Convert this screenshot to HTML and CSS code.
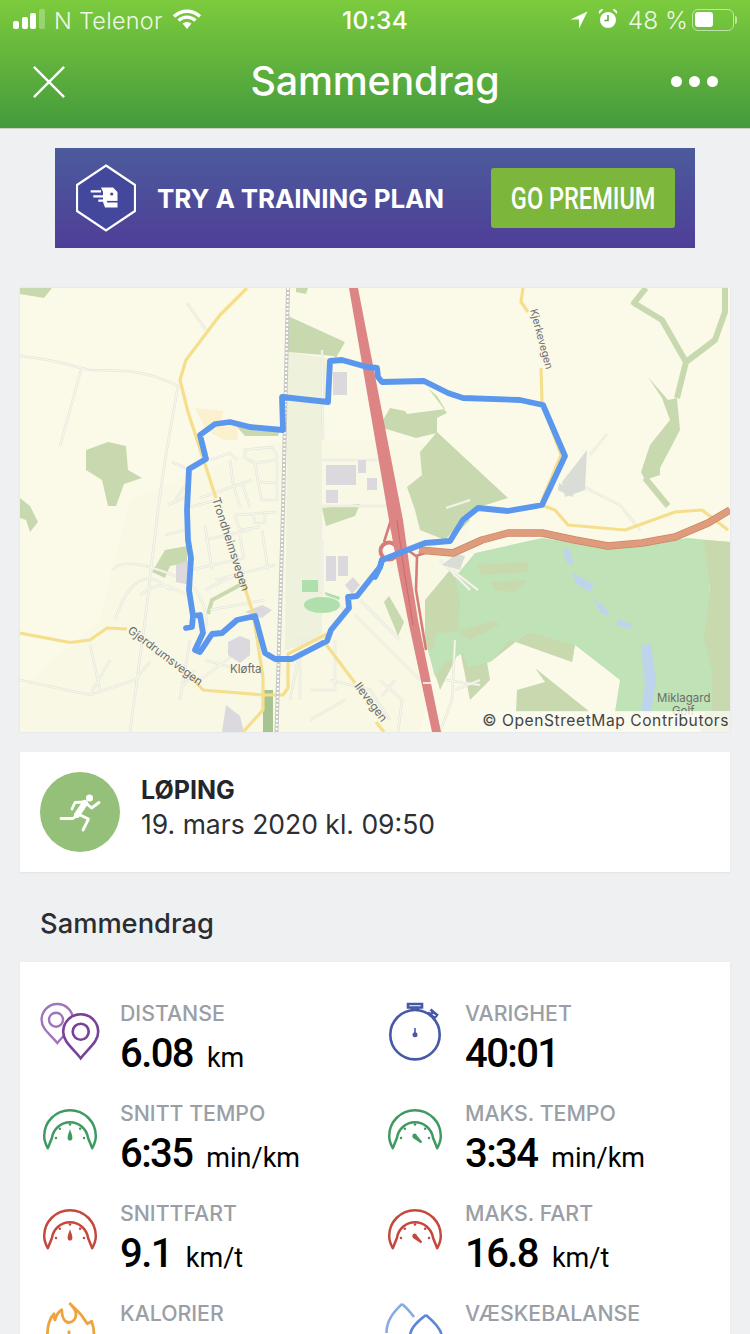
FILE: index.html
```html
<!DOCTYPE html>
<html lang="nb">
<head>
<meta charset="utf-8">
<title>Sammendrag</title>
<link rel="stylesheet" href="styles.css">
</head>
<body>
<div class="page">
  <header class="top">
    <div class="status">
      <div class="status-left">
        <svg class="sig" viewBox="0 0 34 22"><rect x="0" y="13" width="6" height="8" rx="2"/><rect x="9" y="9" width="6" height="12" rx="2"/><rect x="17" y="5" width="6" height="16" rx="2"/><rect class="dim" x="26" y="1" width="6" height="20" rx="2"/></svg>
        <span class="carrier">N Telenor</span>
        <svg class="wifi" viewBox="0 0 30 22"><path class="wifi-arc" d="M2 8.500C9.500 1.500 20.500 1.500 28 8.500M6.500 12.500C11.500 8 18.500 8 23.500 12.500"/><path class="wifi-fill" d="M10.500 15.500C13 13.400 17 13.400 19.500 15.500L15 21Z"/></svg>
      </div>
      <div class="clock">10:34</div>
      <div class="status-right">
        <svg class="loc" viewBox="0 0 18 18"><path d="M17.500 0.500 0.500 8.500H9V17.500Z"/></svg>
        <svg class="alarm" viewBox="0 0 20 22"><circle cx="10" cy="12" r="8"/><path d="M1 6 5.500 1.500C3 .5 0 2.500 1 6ZM19 6 14.500 1.500C17 .5 20 2.500 19 6Z"/><path class="alarm-hand" d="M10 7V12.500H6.500"/></svg>
        <span class="pct">48 %</span>
        <div class="batt"><div class="batt-fill"></div></div>
        <div class="nub"></div>
      </div>
    </div>
    <div class="nav">
      <svg class="close" viewBox="0 0 36 36"><path d="M2 2 34 34M34 2 2 34"/></svg>
      <h1 class="title">Sammendrag</h1>
      <div class="more"><i></i><i></i><i></i></div>
    </div>
  </header>

  <main class="body">
    <div class="banner">
      <svg class="hex" viewBox="0 0 60 68">
        <path class="hex-shape" d="M30 1.500 59 21V47L30 66.500 1 47V21Z"/>
        <path class="hex-glyph" d="M25 23.500H37L41.500 28V43.500H29L27 38V28Z"/>
        <path class="hex-line" d="M14.700 27.300H25M17.300 32.300H27M22.300 36.700H28"/>
        <path class="hex-dark" d="M31 37.700H42"/>
        <circle class="hex-eye" cx="35.700" cy="30" r="1.600"/>
      </svg>
      <span class="banner-text">TRY A TRAINING PLAN</span>
      <div class="cta"><span class="cta-text">GO PREMIUM</span></div>
    </div>

    <section class="map">
      <svg class="map-svg" viewBox="20 288 710 444">
        <defs>
          <g id="streets">
            <path d="M20 356C60 360 70 366 90 370 130 370 150 372 178 386L165 460 158 510 152 560 145 620 130 732"/>
            <path d="M81 370 60 446M187 303 206 330"/>
            <path d="M172 462 190 470 200 465M175 500 190 480M168 505 190 495M165 535 185 530"/>
            <path d="M243 450 272 447 277 455 277 483 277 500 262 500 258 482 255 463 245 458 245 450M255 463 277 460M258 482 277 483"/>
            <path d="M210 460 230 453 237 460M230 460 233 483 240 507M200 498 252 480M242 483 250 507M190 507 217 500M233 515 277 512M253 513 255 523 265 523 265 512M235 515 240 530 260 527"/>
            <path d="M205 540 250 530M215 580 275 565M190 570 245 558M205 525 212 570 M240 535 244 560M262 530 268 570"/>
            <path d="M140 595C150 588 160 578 186 595M112 570C125 555 160 570 186 580 200 590 210 615 205 630M115 620C130 575 150 570 170 590M205 590 245 570M210 610 265 600"/>
            <path d="M20 680 90 695 135 680 150 662M90 645 100 690M110 660 90 695M190 640 180 700M200 680 240 650M205 660 240 670M180 690 195 670"/>
            <path d="M322 350 323 440M322 460H392M322 506H392M320 520 320 590 345 610M322 540V590M360 600 400 640M355 615 420 680M330 640H300V700M310 690H335V640M330 680 370 690 390 720M310 720 345 700M300 650 290 700"/>
            <path d="M590 455 607 434M570 480 620 505 640 530M446 508 470 500M440 560 470 590M452 570 478 590M455 640 452 700 440 732M445 680 480 685M455 690 480 680M380 680 402 700 398 732M382 696 395 680"/>
          </g>
        </defs>
        <rect class="m-bg" x="20" y="288" width="710" height="444"/>
        <path class="m-town" d="M130 500 200 470 285 440 285 732H20V690L100 620ZM285 440H420L470 520 420 732H285Z"/>
        <path class="m-field" d="M288 352 327 358V402H322V640L285 650Z"/>
        <path class="m-sand" d="M195 408 223 411 222 425 237 426 238 440 224 440 206 430Z"/>

        <g class="m-forest">
          <path d="M20 288H52L44 298 20 294ZM288 316 345 342 336 358 334 356 288 352ZM86 450 108 442 126 446 128 470 142 478 124 484 116 506 108 506 102 480 86 470ZM20 498 30 506 38 522 30 532 26 520 20 518ZM296 288H308L306 294 296 292ZM383 420 390 408 405 411 407 414 445 409 437 396 428 388 447 413 437 418 437 433 416 438 383 428ZM420 452 437 432 508 498 476 508 463 520 445 540 420 530 415 510 407 487 422 475ZM165 550 187 546 187 563 170 566 165 578 152 572ZM322 508 360 504 355 516 326 526ZM236 426 250 427 280 430 278 436 245 436ZM425 600 450 570 480 620 490 680 470 700 460 650 440 690 425 640ZM708 540 730 542V732H700L708 700 700 640 710 590Z"/>
          <path d="M668 400 677 398 680 430 660 468 660 475 645 480 641 472 650 445 670 420 662 398 648 377Z"/>
          <path d="M389 596 404 622 398 636 384 602ZM460 510 470 520 458 532Z"/>
        </g>
        <path class="m-strip" d="M646 288 634 303 662 320 686 362 715 340 725 312V288M686 362 677 398M645 478 668 506"/>
        <path class="m-strip-soft" d="M208 614 212 600 240 585"/>
        <path class="m-golf" d="M455 577 475 553 542 538 608 548 688 538 708 540 710 600 706 640 720 700 730 700V712H615L620 680 575 645 572 662 528 632 490 662 468 667 463 653 445 663 435 677 428 650 425 607Z"/>
        <path class="m-rough" d="M425 607 455 577 460 600 458 632 436 633 433 650 428 650ZM458 632 495 620 500 625 470 640ZM490 662 528 632 575 645 572 662 510 640ZM477 565 528 562 528 572 482 575ZM490 582 528 580 515 592 495 590ZM704 540 730 542V580L716 610 720 660 730 680 712 670 704 640 710 590Z"/>
        <path class="m-forest-solid" d="M490 712H516L517 690 545 682 535 668 590 712ZM712 672 730 675V732H712Z"/>
        <g class="m-water">
          <path d="M563 549 570 550 574 566 566 562ZM572 572 594 585 590 592 576 584ZM593 598 606 608 610 617 600 612ZM618 619 632 624 630 629 616 625Z"/>
          <path d="M641 646 651 644 656 680 651 712H641L645 685Z"/>
        </g>

        <use class="m-street" href="#streets"/>
        <use class="m-street-core" href="#streets"/>

        <g class="m-build">
          <path d="M333 372H347V395H333ZM326 465H356V485H326ZM326 490H338V503H326ZM367 478H377V490H367ZM358 460H366V473H358ZM326 556H336V581H326ZM338 556H348V576H338ZM345 585 353 577 360 585 352 594ZM228 642 240 636 250 640 250 655 240 663 228 655ZM226 705 240 716 244 732H222ZM176 565 190 560 190 585 176 582ZM245 612 262 605 272 610 262 618ZM390 530H395V520H390Z"/>
          <path class="m-build-lite" d="M562 482 587 450 585 490 565 497ZM559 483 575 492 572 497 558 490ZM456 554 465 556 460 570 442 565Z"/>
        </g>
        <g class="m-green2">
          <path d="M302 580H318V592H302ZM325 592 340 597 339 600 326 595Z"/>
          <ellipse cx="322" cy="605" rx="18" ry="8"/>
        </g>
        <path class="m-rail-green" d="M263 690H273V732H263Z"/>

        <path class="m-yellow" d="M247 288 220 315 186 360 180 380 188 412 216 498M243 582 253 613 263 677 263 710 243 732"/>
        <path class="m-yellow" d="M20 633 70 642.500 90 640 107 628 127 629M192 678 203 690 263 695 283 695 288 688 288 654 327 634M325 643 355 683M376 722 384 732"/>
        <path class="m-yellow" d="M523 288 521 302 528 312M541 368 542 403 561 455 543 498 541 505 555 510 568 525 625 530 675 512 702 510 728 530"/>

        <path class="m-rail" d="M288 288 283 510 276.500 732"/>
        <path class="m-rail-top" d="M288 288 283 510 276.500 732"/>

        <circle class="m-ring" cx="389" cy="551" r="8.500"/>
        <path class="m-red-thin" d="M391 520 384 542M417 557 416 590 426 650M405 548 416 556 428 552"/>
        <path class="m-orange-edge" d="M419 550 453 553 482 540 508 533 542 533 575 540 608 546 642 543 675 537 708 523 730 510"/>
        <path class="m-orange" d="M419 550 453 553 482 540 508 533 542 533 575 540 608 546 642 543 675 537 708 523 730 510"/>
        <path class="m-red" d="M349 288H358L403 520 410 570 418 620 441 732H432L408 620 398 570 389 520Z"/>
        <path class="m-red-line" d="M397 520 404 570 413 625"/>
        <path class="m-bridge" d="M423 683H432"/>

        <path class="m-route" d="M186 628 192 627 193 616 200 615 203 633 195 650 200 652 212 634 222 633 237 620 255 616 265 653 275 659 292 659 327 641 331 630 349 608 348 597 357 596 380 567 382 560 425 543 450 541 463 520 478 508 508 511 542 505 565 456 543 405 520 400 463 398 448 393 424 381 382 382 378 377 377 368 367 367 342 360 330 361 328 402 282 397 283 430 250 427 230 422 215 424 200 435 206 459 189 469 187 510 188 540 191 558 189 590 193 616"/>
        <path class="m-route" d="M382 560 380 567 375 577"/>

        <text class="m-label" transform="translate(212 499) rotate(72)">Trondheimsvegen</text>
        <text class="m-label" transform="translate(127 632) rotate(37)">Gjerdrumsvegen</text>
        <text class="m-label" transform="translate(354 686) rotate(53)">Ilevegen</text>
        <text class="m-label m-label-sm" transform="translate(530 310) rotate(75)">Kjerkevegen</text>
        <text class="m-label" x="230" y="673">Kløfta</text>
        <text class="m-label" x="657" y="702">Miklagard</text>
        <text class="m-label" x="672" y="715">Golf</text>
      </svg>
      <div class="attr">© OpenStreetMap Contributors</div>
    </section>

    <section class="activity">
      <div class="avatar">
        <svg class="runner" viewBox="0 0 80 80">
          <circle class="run-head" cx="49.500" cy="26" r="3.500"/>
          <path class="run-body" d="M45 31 37 43"/>
          <path class="run-limb" d="M44 30 35 30.500 32 37M45 30 51.500 36 59 30.500M37 43 33 46.500H21M38 42 48.500 47 43 58"/>
        </svg>
      </div>
      <div class="activity-text">
        <div class="activity-name">LØPING</div>
        <div class="activity-date">19. mars 2020 kl. 09:50</div>
      </div>
    </section>

    <h2 class="section-title">Sammendrag</h2>

    <section class="stats">
      <div class="stat">
        <svg class="icon" viewBox="0 0 60 60">
          <path class="pin-a" d="M17.300 44C10 35 1.600 30 1.600 20.700 1.600 12 8.500 5 17.300 5S33 12 33 20.700C33 30 24.500 35 17.300 44Z"/>
          <circle class="pin-a" cx="16" cy="20.700" r="7"/>
          <path class="pin-b" d="M40.700 59.300C33 49 23.200 43 23.200 32.700 23.200 23 31 15.200 40.700 15.200S58.200 23 58.200 32.700C58.200 43 48.400 49 40.700 59.300Z"/>
          <circle class="pin-b" cx="40.700" cy="32.700" r="8"/>
        </svg>
        <div class="stat-text">
          <div class="stat-label">DISTANSE</div>
          <div class="stat-value"><b>6.08</b><span>km</span></div>
        </div>
      </div>
      <div class="stat">
        <svg class="icon" viewBox="0 0 60 60">
          <path class="watch" d="M30 11A24.700 24.700 0 1 0 30 60.400 24.700 24.700 0 1 0 30 11ZM27 11V8.500H33V11M23 5H37V8.500H23ZM44 17 47.500 13.500M45.500 10.500 52 16 49.500 19 43 13.500"/>
          <circle class="watch-dot" cx="30" cy="35.700" r="2.500"/>
          <path class="watch-needle" d="M30 35.700V29"/>
        </svg>
        <div class="stat-text">
          <div class="stat-label">VARIGHET</div>
          <div class="stat-value"><b>40:01</b></div>
        </div>
      </div>
      <div class="stat">
        <svg class="icon gauge gauge-green" viewBox="0 0 60 60">
          <path class="g-line" d="M7 42.700C4.500 38 3.300 34 3.300 30A26.700 26.700 0 0 1 56.700 30C56.700 34 55.500 38 53 42.700L48.700 32A18.900 18.900 0 0 0 11.300 32Z"/>
          <g class="g-dots"><circle cx="15.500" cy="32" r="1.300"/><circle cx="19.500" cy="22.500" r="1.300"/><circle cx="30" cy="18" r="1.300"/><circle cx="40.500" cy="22.500" r="1.300"/><circle cx="44.500" cy="32" r="1.300"/></g>
          <path class="g-dots" d="M27.500 32C27.500 29 29 26 30 23 31 26 32.500 29 32.500 32 32.500 35.500 27.500 35.500 27.500 32Z"/>
        </svg>
        <div class="stat-text">
          <div class="stat-label">SNITT TEMPO</div>
          <div class="stat-value"><b>6:35</b><span>min/km</span></div>
        </div>
      </div>
      <div class="stat">
        <svg class="icon gauge gauge-green" viewBox="0 0 60 60">
          <path class="g-line" d="M7 42.700C4.500 38 3.300 34 3.300 30A26.700 26.700 0 0 1 56.700 30C56.700 34 55.500 38 53 42.700L48.700 32A18.900 18.900 0 0 0 11.300 32Z"/>
          <g class="g-dots"><circle cx="15.500" cy="32" r="1.300"/><circle cx="19.500" cy="22.500" r="1.300"/><circle cx="30" cy="18" r="1.300"/><circle cx="40.500" cy="22.500" r="1.300"/><circle cx="44.500" cy="32" r="1.300"/></g>
          <path class="g-dots" d="M28 28C30 26.500 32 28 32 29.500L37.500 36 36 37.500 29.500 33C27.500 32.500 26.500 30 28 28Z"/>
        </svg>
        <div class="stat-text">
          <div class="stat-label">MAKS. TEMPO</div>
          <div class="stat-value"><b>3:34</b><span>min/km</span></div>
        </div>
      </div>
      <div class="stat">
        <svg class="icon gauge gauge-red" viewBox="0 0 60 60">
          <path class="g-line" d="M7 42.700C4.500 38 3.300 34 3.300 30A26.700 26.700 0 0 1 56.700 30C56.700 34 55.500 38 53 42.700L48.700 32A18.900 18.900 0 0 0 11.300 32Z"/>
          <g class="g-dots"><circle cx="15.500" cy="32" r="1.300"/><circle cx="19.500" cy="22.500" r="1.300"/><circle cx="30" cy="18" r="1.300"/><circle cx="40.500" cy="22.500" r="1.300"/><circle cx="44.500" cy="32" r="1.300"/></g>
          <path class="g-dots" d="M27.500 32C27.500 29 29 26 30 23 31 26 32.500 29 32.500 32 32.500 35.500 27.500 35.500 27.500 32Z"/>
        </svg>
        <div class="stat-text">
          <div class="stat-label">SNITTFART</div>
          <div class="stat-value"><b>9.1</b><span>km/t</span></div>
        </div>
      </div>
      <div class="stat">
        <svg class="icon gauge gauge-red" viewBox="0 0 60 60">
          <path class="g-line" d="M7 42.700C4.500 38 3.300 34 3.300 30A26.700 26.700 0 0 1 56.700 30C56.700 34 55.500 38 53 42.700L48.700 32A18.900 18.900 0 0 0 11.300 32Z"/>
          <g class="g-dots"><circle cx="15.500" cy="32" r="1.300"/><circle cx="19.500" cy="22.500" r="1.300"/><circle cx="30" cy="18" r="1.300"/><circle cx="40.500" cy="22.500" r="1.300"/><circle cx="44.500" cy="32" r="1.300"/></g>
          <path class="g-dots" d="M28 28C30 26.500 32 28 32 29.500L37.500 36 36 37.500 29.500 33C27.500 32.500 26.500 30 28 28Z"/>
        </svg>
        <div class="stat-text">
          <div class="stat-label">MAKS. FART</div>
          <div class="stat-value"><b>16.8</b><span>km/t</span></div>
        </div>
      </div>
      <div class="stat">
        <svg class="icon" viewBox="0 0 60 60">
          <path class="flame" d="M29.300 4C33 8 36 11 36 15 36 20 33 23 29 23.500 25 23.500 22 19 21.700 10.700 18 13 16 17 15 21 14 19 14 17 14 14.700 10 19 7.500 26 7.300 36M29.300 4C34 9 40 13 43.300 19 45 21 46 23 47.300 24.700 49 24 50.500 23 51.700 22.300 53 26 54 30 54 36M29 31.500V36"/>
        </svg>
        <div class="stat-text">
          <div class="stat-label">KALORIER</div>
        </div>
      </div>
      <div class="stat">
        <svg class="icon" viewBox="0 0 60 60">
          <path class="drop-a" d="M17 5C10 12 1.500 20 1.500 34M17 5C22 9 26 14 29 18"/>
          <path class="drop-b" d="M41 16C33 22 26 28 25 36M41 16C48 22 56 30 56.500 36"/>
        </svg>
        <div class="stat-text">
          <div class="stat-label">VÆSKEBALANSE</div>
        </div>
      </div>
    </section>
  </main>
</div>
</body>
</html>
```

FILE: styles.css
```css
* { box-sizing: border-box; }
html, body { margin: 0; padding: 0; background: #eff0f2; }
body { font-family: Inter, Roboto, "Noto Sans", sans-serif; }
.page { width: 750px; height: 1334px; overflow: hidden; display: flex; flex-direction: column; }

/* header */
.top { height: 129px; flex: none; background: linear-gradient(#7ccb3d, #449a3c); border-bottom: 1px solid #c9d0c6; color: #fff; }
.status { height: 40px; display: grid; grid-template-columns: 1fr auto 1fr; align-items: center; padding: 0 13px 0 13px; font-size: 23.4px; }
.status-left, .status-right { display: flex; align-items: center; }
.status-right { justify-content: flex-end; }
.sig { width: 34px; height: 22px; fill: #fff; margin-top: -2px; }
.sig .dim { fill: rgba(255,255,255,.28); }
.carrier { margin-left: 7px; font-weight: 300; letter-spacing: .3px; color: #eef8e4; }
.wifi { width: 30px; height: 22px; margin-left: 9px; margin-top: -3px; }
.wifi-arc { fill: none; stroke: #fff; stroke-width: 3.4; }
.wifi-fill { fill: #fff; }
.clock { font-weight: 500; font-size: 24.5px; letter-spacing: .2px; }
.loc { width: 18px; height: 18px; fill: #fff; margin-right: 10px; }
.alarm { width: 20px; height: 22px; margin-right: 10px; margin-top: -2px; fill: #fff; }
.alarm-hand { fill: none; stroke: #5aaf3c; stroke-width: 1.6; }
.pct { font-weight: 300; font-size: 24.5px; margin-right: 4px; color: #eef8e4; }
.batt { width: 42px; height: 22px; border: 1.5px solid rgba(255,255,255,.55); border-radius: 6px; padding: 2px; margin-top: -1px; }
.batt-fill { width: 18px; height: 15px; background: #fff; border-radius: 3px; }
.nub { width: 2px; height: 8px; background: rgba(255,255,255,.55); margin-left: 1px; border-radius: 0 2px 2px 0; }

.nav { height: 88px; display: grid; grid-template-columns: 1fr auto 1fr; align-items: center; padding: 0 32px 5px 32px; }
.close { width: 34px; height: 34px; fill: none; stroke: #fff; stroke-width: 2.5; }
.title { margin: 0; font-size: 39.4px; font-weight: 500; letter-spacing: -.2px; line-height: 1; }
.more { display: flex; gap: 7px; justify-content: flex-end; }
.more i { width: 11px; height: 11px; border-radius: 50%; background: #fff; display: block; }

/* body */
.body { flex: 1; padding: 19px 20px 0; display: flex; flex-direction: column; min-height: 0; }
.banner { width: 640px; height: 100px; flex: none; margin: 0 auto 40px; background: linear-gradient(#4b5b9c, #4f3e98); display: flex; align-items: center; padding: 0 20px 0 21px; color: #fff; }
.hex { width: 60px; height: 68px; flex: none; }
.hex-shape { fill: #43489c; stroke: #fff; stroke-width: 2.2; }
.hex-glyph { fill: #fff; }
.hex-line { fill: none; stroke: #fff; stroke-width: 2.2; }
.hex-dark { fill: none; stroke: #43489c; stroke-width: 1.6; }
.hex-eye { fill: #43489c; }
.banner-text { margin-left: 21px; font-size: 26px; font-weight: 700; letter-spacing: -.1px; white-space: nowrap; }
.cta { width: 184px; height: 60px; margin-left: auto; background: #7cb63a; border-radius: 3px; display: flex; align-items: center; justify-content: center; }
.cta-text { font-family: Roboto, sans-serif; font-size: 31px; font-weight: 500; display: inline-block; transform: scaleX(.76); white-space: nowrap; }

/* map */
.map { position: relative; width: 710px; height: 444px; flex: none; box-shadow: 0 0 2px rgba(0,0,0,.08); overflow: hidden; }
.map-svg { display: block; width: 710px; height: 444px; }
.m-bg { fill: #fbfae8; }
.m-town { fill: #f8f8e5; }
.m-field { fill: #eef1dc; }
.m-sand { fill: #fbf1cf; }
.m-forest path, .m-forest-solid { fill: #c9d9af; }
.m-strip { fill: none; stroke: #c9d9af; stroke-width: 6; stroke-linejoin: round; }
.m-strip-soft { fill: none; stroke: #c9d9af; stroke-width: 4; }
.m-golf { fill: #bfe2b7; }
.m-rough { fill: #c8d9ae; }
.m-water path { fill: #bcd5ec; }
.m-street { fill: none; stroke: #e6e6da; stroke-width: 2.6; }
.m-street-core { fill: none; stroke: #f8f8ee; stroke-width: 1.1; }
.m-build path { fill: #dbd9dd; }
.m-build .m-build-lite { fill: #dadcd6; }
.m-green2 path, .m-green2 ellipse { fill: #b0dfae; }
.m-rail-green { fill: #a6c48f; }
.m-yellow { fill: none; stroke: #f5df8c; stroke-width: 3.2; stroke-linejoin: round; }
.m-rail { fill: none; stroke: #c9c9c4; stroke-width: 4; }
.m-rail-top { fill: none; stroke: #fff; stroke-width: 2; stroke-dasharray: 2 2; }
.m-ring { fill: #fbfbf0; stroke: #d67d78; stroke-width: 4; }
.m-red { fill: #dd8585; }
.m-red-line { fill: none; stroke: #c86a6a; stroke-width: 1; }
.m-red-thin { fill: none; stroke: #d67d78; stroke-width: 2.6; }
.m-orange { fill: none; stroke: #df9c7c; stroke-width: 6; stroke-linejoin: round; }
.m-orange-edge { fill: none; stroke: #cb8568; stroke-width: 7.5; stroke-linejoin: round; }
.m-bridge { stroke: #fff; stroke-width: 1.6; fill: none; }
.m-route { fill: none; stroke: #5c97ee; stroke-width: 5.8; stroke-linejoin: round; stroke-linecap: round; }
.m-label { font-family: Inter, Roboto, sans-serif; font-size: 11.5px; fill: #6c6c6c; }
.m-label-sm { font-size: 10.5px; }
.attr { position: absolute; right: 0; bottom: 0; height: 21px; padding: 0 1px 0 3px; background: rgba(250,250,240,.82); color: #444; font-size: 15.6px; letter-spacing: .55px; line-height: 20px; white-space: nowrap; }

/* activity */
.activity { height: 120px; flex: none; margin-top: 20px; background: #fff; box-shadow: 0 1px 2px rgba(0,0,0,.06); display: flex; align-items: center; padding-left: 20px; }
.avatar { width: 80px; height: 80px; border-radius: 50%; background: #95c079; flex: none; }
.runner { display: block; width: 80px; height: 80px; }
.run-head { fill: #fff; }
.run-body { fill: none; stroke: #fff; stroke-width: 6; stroke-linecap: round; }
.run-limb { fill: none; stroke: #fff; stroke-width: 2.8; stroke-linecap: round; stroke-linejoin: round; }
.activity-text { margin-left: 21px; padding-bottom: 10px; color: #23262b; }
.activity-name { font-size: 25px; font-weight: 700; line-height: 34px; }
.activity-date { font-size: 26.5px; font-weight: 400; line-height: 34px; color: #2c2f33; }

.section-title { margin: 0; height: 90px; flex: none; padding: 34px 0 0 20px; font-size: 27.3px; line-height: 36px; font-weight: 500; color: #2a2d31; }

/* stats */
.stats { flex: 1; background: #fff; box-shadow: 0 1px 2px rgba(0,0,0,.06); display: grid; grid-template-columns: 345px 345px; grid-auto-rows: 100px; padding: 37px 0 0 20px; overflow: hidden; min-height: 400px; }
.stat { display: flex; }
.icon { width: 60px; height: 60px; flex: none; overflow: visible; }
.gauge { width: 58px; height: 58px; margin: 8px 1px 0; }
.stat-text { margin-left: 20px; }
.stat-label { font-size: 21.3px; font-weight: 500; line-height: 28px; color: #9a9ea6; white-space: nowrap; }
.stat-value { line-height: 50px; padding-top: 2px; color: #000; white-space: nowrap; font-family: Roboto, sans-serif; }
.stat-value b { font-size: 40px; font-weight: 500; letter-spacing: -1.6px; }
.stat-value span { font-size: 27px; margin-left: 14px; }

.pin-a { fill: none; stroke: #a075bb; stroke-width: 2.4; }
.pin-b { fill: #fff; stroke: #7a4197; stroke-width: 2.6; }
.watch { fill: none; stroke: #4659a6; stroke-width: 2.6; }
.watch-dot { fill: #4659a6; }
.watch-needle { stroke: #4659a6; stroke-width: 1.6; fill: none; }
.g-line { fill: none; stroke-width: 2.6; stroke-linejoin: round; }
.gauge-green .g-line { stroke: #3f9a62; }
.gauge-green .g-dots { fill: #3f9a62; }
.gauge-red .g-line { stroke: #c4483c; }
.gauge-red .g-dots { fill: #c4483c; }
.flame { fill: none; stroke: #eda43e; stroke-width: 2.8; stroke-linejoin: round; }
.drop-a { fill: none; stroke: #88a9e2; stroke-width: 2.6; }
.drop-b { fill: none; stroke: #5d86d6; stroke-width: 2.6; }
```
